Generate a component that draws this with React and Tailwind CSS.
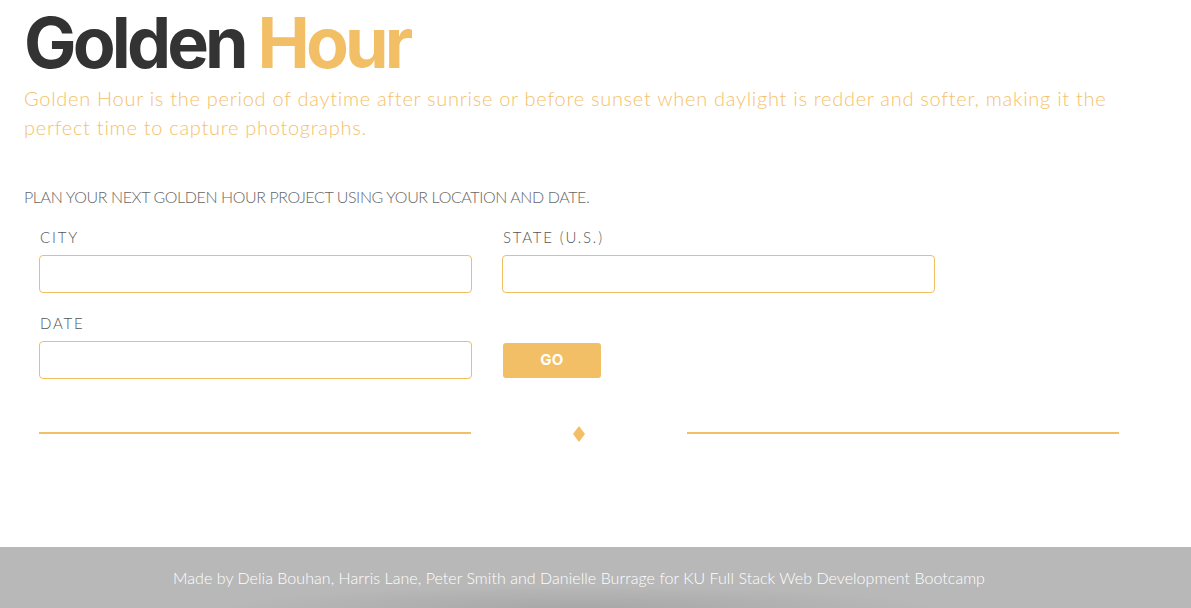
import React, { useState } from "react";

const Field = ({ label, value, onChange, id }) => (
  <label htmlFor={id} className="flex flex-col">
    <span className="h-[19px] pl-[1px] text-[15px] leading-[19px] font-light tracking-[0.12em] text-[#555]">
      {label}
    </span>
    <input
      id={id}
      type="text"
      value={value}
      onChange={(e) => onChange(e.target.value)}
      className="mt-[8px] h-[38px] w-[433px] rounded-[4px] border border-[#f3bd62] bg-white px-3 text-[15px] text-[#333] focus:outline-none"
    />
  </label>
);

export default function App() {
  const [city, setCity] = useState("");
  const [state, setState] = useState("");
  const [date, setDate] = useState("");

  return (
    <div className="min-h-[608px] flex flex-col bg-white font-['Lato',sans-serif]">
      <main className="w-[1158px] flex-1 px-6">
        <h1 className="pt-[1px] text-[70px] leading-[84px] font-bold tracking-[-0.055em] font-['Inter',sans-serif] text-[#333]">
          Golden <span className="text-[#f3bf66]">Hour</span>
        </h1>
        <p className="mt-[-1px] max-w-[1100px] text-[20px] leading-[29px] font-light tracking-[0.036em] text-[#f5c16b]">
          Golden Hour is the period of daytime after sunrise or before sunset
          when daylight is redder and softer, making it the perfect time to
          capture photographs.
        </p>

        <p className="mt-[45px] text-[16px] leading-[20px] font-light tracking-[-0.025em] text-[#666]">
          PLAN YOUR NEXT GOLDEN HOUR PROJECT USING YOUR LOCATION AND DATE.
        </p>

        <div className="mt-[21px] pl-[15px] grid grid-cols-[433px_433px] gap-x-[30px] gap-y-[21px]">
          <Field id="city" label="CITY" value={city} onChange={setCity} />
          <Field id="state" label="STATE (U.S.)" value={state} onChange={setState} />
          <Field id="date" label="DATE" value={date} onChange={setDate} />
          <div className="flex items-end pb-[1px]">
            <button className="ml-[1px] h-[35px] w-[98px] rounded-[3px] bg-[#f3bf66] text-[15px] font-bold tracking-[0.02em] text-white font-['Inter',sans-serif]">
              GO
            </button>
          </div>
        </div>

        <div className="mt-[44px] pl-[15px] flex w-[1095px] items-center">
          <div className="h-[2px] w-[432px] bg-[#f3bf66]" />
          <div className="flex flex-1 justify-center pt-[3px]">
            <svg width="12" height="16" viewBox="0 0 12 16">
              <path d="M6 0 L12 8 L6 16 L0 8 Z" fill="#f3bf66" />
            </svg>
          </div>
          <div className="h-[2px] w-[432px] bg-[#f3bf66]" />
        </div>
      </main>

      <footer className="mt-auto flex h-[61px] items-center bg-[#b8b8b8] bg-[radial-gradient(ellipse_360px_22px_at_580px_61px,rgba(0,0,0,0.09),transparent)]">
        <div className="w-[1158px] text-center text-[16px] font-light tracking-[0.003em] text-white">
          Made by Delia Bouhan, Harris Lane, Peter Smith and Danielle Burrage
          for KU Full Stack Web Development Bootcamp
        </div>
      </footer>
    </div>
  );
}
